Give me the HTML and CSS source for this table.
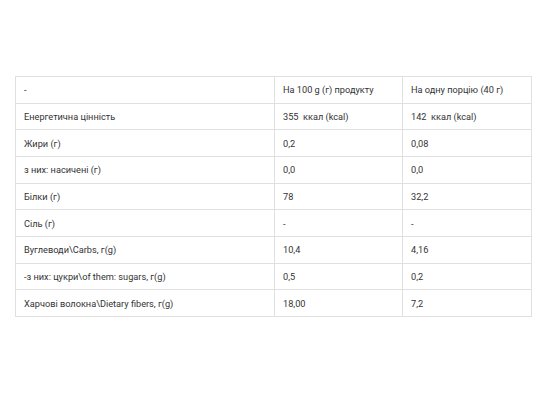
FILE: index.html
```html
<!DOCTYPE html>
<html lang="uk">
<head>
<meta charset="utf-8">
<link rel="stylesheet" href="styles.css">
</head>
<body>
<div class="page">
<table class="nutri">
<tr><td>-</td><td>На 100 g (г) продукту</td><td>На одну порцію (40 г)</td></tr>
<tr><td>Енергетична цінність</td><td>355&nbsp; ккал (kcal)</td><td>142&nbsp; ккал (kcal)</td></tr>
<tr><td>Жири (г)</td><td>0,2</td><td>0,08</td></tr>
<tr><td>з них: насичені (г)</td><td>0,0</td><td>0,0</td></tr>
<tr><td>Білки (г)</td><td>78</td><td>32,2</td></tr>
<tr><td>Сіль (г)</td><td>-</td><td>-</td></tr>
<tr><td>Вуглеводи\Carbs, г(g)</td><td>10,4</td><td>4,16</td></tr>
<tr><td>-з них: цукри\of them: sugars, г(g)</td><td>0,5</td><td>0,2</td></tr>
<tr><td>Харчові волокна\Dietary fibers, г(g)</td><td>18,00</td><td>7,2</td></tr>
</table>
</div>
</body>
</html>
```
FILE: styles.css
```css
html, body { margin: 0; padding: 0; background: #fff; }
.page { padding: 76px 0 0 15px; }
.nutri {
  border-collapse: collapse;
  width: 517px;
  font-family: Roboto, "Noto Sans", sans-serif;
  font-size: 9.2px;
  color: #333;
}
.nutri td {
  border: 1px solid #e0e0e0;
  height: 26.67px;
  padding: 0 8px;
  box-sizing: border-box;
  vertical-align: middle;
  white-space: nowrap;
}
.nutri td:nth-child(1) { width: 259px; }
.nutri td:nth-child(2) { width: 128px; }
```
